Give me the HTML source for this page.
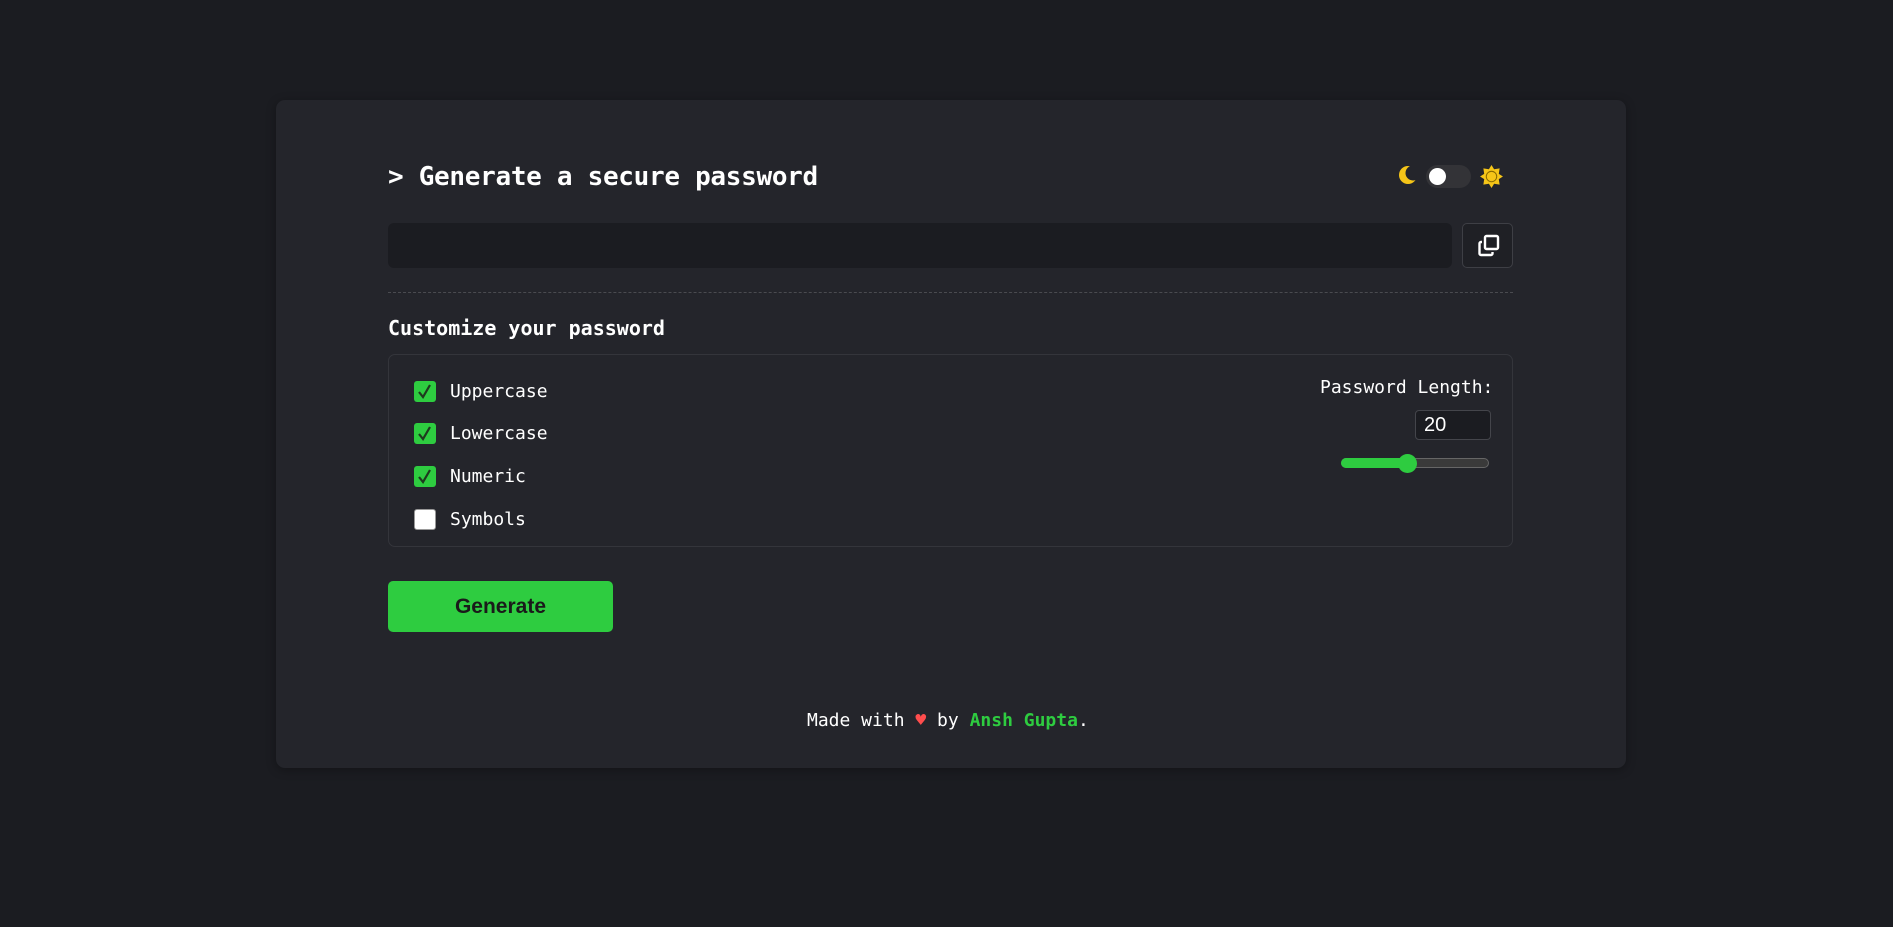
<!DOCTYPE html>
<html><head><meta charset="utf-8"><style>
*{box-sizing:border-box;margin:0;padding:0}
html,body{width:1893px;height:927px;background:#1b1c21;overflow:hidden;font-family:"DejaVu Sans Mono","Liberation Mono",monospace;color:#fff}
.card{position:absolute;left:276px;top:100px;width:1350px;height:668px;background:#24252b;border-radius:9px;box-shadow:0 2px 10px rgba(0,0,0,.3)}
.a{position:absolute;white-space:nowrap}
.title{left:388px;top:160px;font-size:26px;font-weight:bold;line-height:34px;letter-spacing:-0.3px}
.input{left:388px;top:223px;width:1064px;height:45px;background:#1b1c21;border-radius:6px}
.copy{left:1462px;top:223px;width:51px;height:45px;border:1px solid #3e3f45;border-radius:5px;background:#1f2025}
.dash{left:388px;top:292px;width:1125px;border-top:1px dashed #4a4b50}
.sub{left:388px;top:315px;font-size:20px;font-weight:bold;line-height:26px}
.box{left:388px;top:354px;width:1125px;height:193px;border:1px solid #34353b;border-radius:7px}
.cb{position:absolute;left:414px;width:22px;height:21px;border-radius:3px;background:#2ecc40}
.cb svg{position:absolute;left:3px;top:2px}
.cb.off{background:#fff;border:1px solid #999}
.lbl{position:absolute;left:450px;font-size:18px;line-height:22px}
.plen{left:1320px;top:377px;font-size:18px;line-height:22px}
.num{left:1415px;top:410px;width:76px;height:30px;background:#1b1c21;border:1px solid #44454b;border-radius:4px;font-family:"Liberation Sans",sans-serif;font-size:20px;line-height:28px;padding-left:8px}
.track{left:1341px;top:458px;width:148px;height:10px;border-radius:5px;background:#3a3a3a;border:1px solid #666}
.fill{left:1341px;top:458px;width:66px;height:10px;border-radius:5px;background:#2ecc40}
.thumb{left:1398px;top:454px;width:19px;height:19px;border-radius:50%;background:#2ecc40}
.btn{left:388px;top:581px;width:225px;height:51px;background:#2ecc40;border-radius:5px;font-family:"Liberation Sans",sans-serif;font-weight:bold;font-size:21px;color:#1a1a1a;text-align:center;line-height:51px}
.foot{left:807px;top:709px;font-size:18px;line-height:24px}
.tog{left:1426px;top:165px;width:45px;height:23px;border-radius:12px;background:#333337}
.knob{left:1429px;top:168px;width:17px;height:17px;border-radius:50%;background:#fff}
</style></head><body>
<div class="card"></div>
<div class="a title">&gt; Generate a secure password</div>
<svg class="a" style="left:1398px;top:164px" width="20" height="22" viewBox="0 0 20 22"><defs><mask id="m"><rect width="20" height="22" fill="#fff"/><circle cx="15" cy="9" r="7.5" fill="#000"/></mask></defs><circle cx="10" cy="11" r="9" fill="#f5c518" mask="url(#m)"/></svg>
<div class="a tog"></div><div class="a knob"></div>
<svg class="a" style="left:1479px;top:164px" width="25" height="25" viewBox="0 0 24 24"><polygon points="12,1 14.5,5 19.8,4.2 19,9.5 23,12 19,14.5 19.8,19.8 14.5,19 12,23 9.5,19 4.2,19.8 5,14.5 1,12 5,9.5 4.2,4.2 9.5,5" fill="#f5c518"/><circle cx="12" cy="12" r="5" fill="#f5c518" stroke="#8a6a00" stroke-width="1"/></svg>
<div class="a input"></div>
<div class="a copy"><svg style="position:absolute;left:13px;top:9px" width="26" height="26" viewBox="0 0 26 26" fill="none" stroke="#fff" stroke-width="2.4"><rect x="9" y="3" width="13" height="13" rx="1.5"/><path d="M6 9H5a1.5 1.5 0 0 0-1.5 1.5v10A1.5 1.5 0 0 0 5 22h10a1.5 1.5 0 0 0 1.5-1.5V19"/></svg></div>
<div class="a dash"></div>
<div class="a sub">Customize your password</div>
<div class="a box"></div>
<div class="cb" style="top:381px"><svg width="16" height="17" viewBox="0 0 16 17"><path d="M2 9l4 5L13 2" fill="none" stroke="#1e3a1e" stroke-width="2.2"/></svg></div>
<div class="lbl" style="top:381px">Uppercase</div>
<div class="cb" style="top:423px"><svg width="16" height="17" viewBox="0 0 16 17"><path d="M2 9l4 5L13 2" fill="none" stroke="#1e3a1e" stroke-width="2.2"/></svg></div>
<div class="lbl" style="top:423px">Lowercase</div>
<div class="cb" style="top:466px"><svg width="16" height="17" viewBox="0 0 16 17"><path d="M2 9l4 5L13 2" fill="none" stroke="#1e3a1e" stroke-width="2.2"/></svg></div>
<div class="lbl" style="top:466px">Numeric</div>
<div class="cb off" style="top:509px"></div>
<div class="lbl" style="top:509px">Symbols</div>
<div class="a plen">Password Length:</div>
<div class="a num">20</div>
<div class="a track"></div><div class="a fill"></div><div class="a thumb"></div>
<div class="a btn">Generate</div>
<div class="a foot">Made with <span style="color:#ff4d4d">♥</span> by <span style="color:#2ecc40;font-weight:bold">Ansh Gupta</span>.</div>
</body></html>
